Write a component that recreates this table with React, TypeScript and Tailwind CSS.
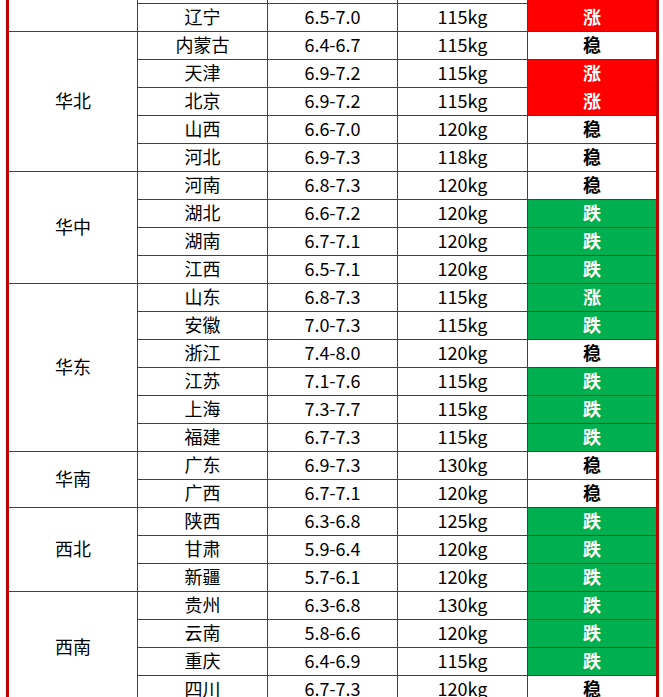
import * as React from "react";

type Row = {
  province: string;
  range: string;
  weight: string;
  trend: "涨" | "稳" | "跌";
  fill: "red" | "green" | "none";
};

type Group = {
  region: string;
  rows: Row[];
};

const r = (
  province: string,
  range: string,
  weight: string,
  trend: Row["trend"],
  fill: Row["fill"],
): Row => ({province, range, weight, trend, fill});

const groups: Group[] = [
  {
    region: "东北",
    rows: [
      r("黑龙江", "6.4-6.9", "115kg", "涨", "red"),
      r("吉林", "6.5-7.0", "115kg", "涨", "red"),
      r("辽宁", "6.5-7.0", "115kg", "涨", "red"),
    ],
  },
  {
    region: "华北",
    rows: [
      r("内蒙古", "6.4-6.7", "115kg", "稳", "none"),
      r("天津", "6.9-7.2", "115kg", "涨", "red"),
      r("北京", "6.9-7.2", "115kg", "涨", "red"),
      r("山西", "6.6-7.0", "120kg", "稳", "none"),
      r("河北", "6.9-7.3", "118kg", "稳", "none"),
    ],
  },
  {
    region: "华中",
    rows: [
      r("河南", "6.8-7.3", "120kg", "稳", "none"),
      r("湖北", "6.6-7.2", "120kg", "跌", "green"),
      r("湖南", "6.7-7.1", "120kg", "跌", "green"),
      r("江西", "6.5-7.1", "120kg", "跌", "green"),
    ],
  },
  {
    region: "华东",
    rows: [
      r("山东", "6.8-7.3", "115kg", "涨", "green"),
      r("安徽", "7.0-7.3", "115kg", "跌", "green"),
      r("浙江", "7.4-8.0", "120kg", "稳", "none"),
      r("江苏", "7.1-7.6", "115kg", "跌", "green"),
      r("上海", "7.3-7.7", "115kg", "跌", "green"),
      r("福建", "6.7-7.3", "115kg", "跌", "green"),
    ],
  },
  {
    region: "华南",
    rows: [
      r("广东", "6.9-7.3", "130kg", "稳", "none"),
      r("广西", "6.7-7.1", "120kg", "稳", "none"),
    ],
  },
  {
    region: "西北",
    rows: [
      r("陕西", "6.3-6.8", "125kg", "跌", "green"),
      r("甘肃", "5.9-6.4", "120kg", "跌", "green"),
      r("新疆", "5.7-6.1", "120kg", "跌", "green"),
    ],
  },
  {
    region: "西南",
    rows: [
      r("贵州", "6.3-6.8", "130kg", "跌", "green"),
      r("云南", "5.8-6.6", "120kg", "跌", "green"),
      r("重庆", "6.4-6.9", "115kg", "跌", "green"),
      r("四川", "6.7-7.3", "120kg", "稳", "none"),
    ],
  },
];

const cell = "w-[130px] border-l border-[#9c1a22] flex items-center justify-center pb-[3px]";

function TrendCell({trend, fill}: {trend: Row["trend"]; fill: Row["fill"]}) {
  const bg =
    fill === "red" ? "bg-[#ff0000] text-white" : fill === "green" ? "bg-[#00b050] text-white" : "bg-white text-black";
  return (
    <div className={`flex-1 border-l border-[#9c1a22] flex items-center justify-center pb-[3px] font-bold ${bg}`}>
      {trend}
    </div>
  );
}

function TableRow({row}: {row: Row}) {
  return (
    <div className="h-[28px] flex border-t border-[#9c1a22]">
      <div className={cell}>{row.province}</div>
      <div className={cell}>{row.range}</div>
      <div className={cell}>{row.weight}</div>
      <TrendCell trend={row.trend} fill={row.fill}/>
    </div>
  );
}

export default function App() {
  return (
    <div
      className="h-[697px] w-[663px] overflow-hidden bg-white pl-[6px] text-[18px] leading-none text-black"
      style={{fontFamily: '"Noto Sans CJK SC", "Noto Sans", sans-serif'}}
    >
      <div className="-mt-[53px] w-[653px] border-x-[3px] border-[#c00000]">
        {groups.map((g) => (
          <div key={g.region} className="flex">
            <div className="w-[128px] border-t border-[#9c1a22] flex items-center justify-center pb-[3px]">
              {g.region}
            </div>
            <div className="flex-1 flex flex-col">
              {g.rows.map((row) => (
                <TableRow key={row.province} row={row}/>
              ))}
            </div>
          </div>
        ))}
      </div>
    </div>
  );
}
